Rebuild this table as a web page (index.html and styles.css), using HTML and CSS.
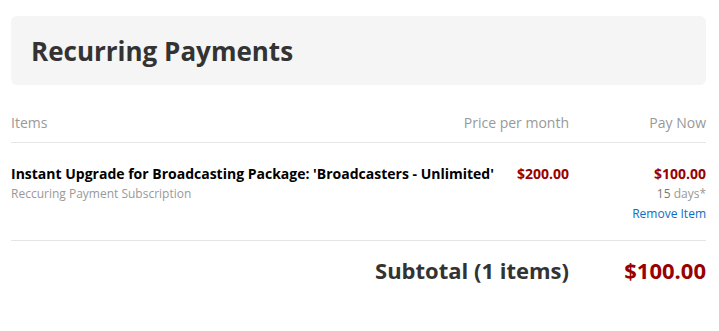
FILE: index.html
```html
<!DOCTYPE html>
<html>
<head>
<meta charset="utf-8">
<link rel="stylesheet" href="styles.css">
</head>
<body>
<div class="page">
  <div class="title-box">
    <h1 class="title">Recurring Payments</h1>
  </div>
  <div class="table">
    <div class="row head">
      <div class="col-item">Items</div>
      <div class="col-price">Price per month</div>
      <div class="col-pay">Pay Now</div>
    </div>
    <div class="row item">
      <div class="col-item">
        <div class="item-name">Instant Upgrade for Broadcasting Package: 'Broadcasters - Unlimited'</div>
        <div class="item-sub">Reccuring Payment Subscription</div>
      </div>
      <div class="col-price price">$200.00</div>
      <div class="col-pay">
        <div class="price">$100.00</div>
        <div class="days"><span class="days-num">15</span> days*</div>
        <a class="remove" href="#">Remove Item</a>
      </div>
    </div>
    <div class="subtotal">
      <div class="sub-label">Subtotal (1 items)</div>
      <div class="sub-value">$100.00</div>
    </div>
  </div>
</div>
</body>
</html>
```
FILE: styles.css
```css
html, body {
  margin: 0;
  padding: 0;
  background: #fff;
}
body {
  font-family: "Open Sans", "Liberation Sans", sans-serif;
  color: #333;
}
.page {
  width: 695px;
  margin: 16px 0 0 11px;
}
.title-box {
  background: #f5f5f5;
  border-radius: 6px;
  height: 69px;
  display: flex;
  align-items: center;
  padding: 0 20px;
}
.title {
  margin: 0;
  font-size: 26px;
  font-weight: 700;
  color: #333;
  line-height: 36px;
}
.table {
  margin-top: 28px;
}
.row {
  display: flex;
  align-items: flex-start;
}
.col-item {
  flex: 1;
}
.col-price {
  width: 160px;
  text-align: right;
}
.col-pay {
  width: 137px;
  text-align: right;
}
.head {
  font-size: 14px;
  color: #999;
  line-height: 20px;
  padding-bottom: 9px;
  border-bottom: 1px solid #e5e5e5;
}
.item {
  padding-top: 20px;
  padding-bottom: 16px;
  border-bottom: 1px solid #e5e5e5;
}
.item-name {
  font-size: 14px;
  font-weight: 700;
  color: #000;
  line-height: 21px;
  white-space: nowrap;
}
.item-sub {
  font-size: 12px;
  color: #999;
  line-height: 20px;
}
.col-price.price {
  width: 74px;
}
.price {
  font-size: 14px;
  font-weight: 700;
  color: #990000;
  line-height: 21px;
}
.days {
  font-size: 12px;
  color: #999;
  line-height: 20px;
}
.days-num {
  color: #777;
}
.remove {
  display: block;
  font-size: 12px;
  color: #0a6ec4;
  text-decoration: none;
  line-height: 20px;
}
.subtotal {
  display: flex;
  justify-content: flex-end;
  align-items: baseline;
  padding-top: 14px;
  font-size: 22px;
  font-weight: 700;
  line-height: 30px;
}
.sub-label {
  color: #333;
}
.sub-value {
  width: 137px;
  text-align: right;
  color: #990000;
}
```
